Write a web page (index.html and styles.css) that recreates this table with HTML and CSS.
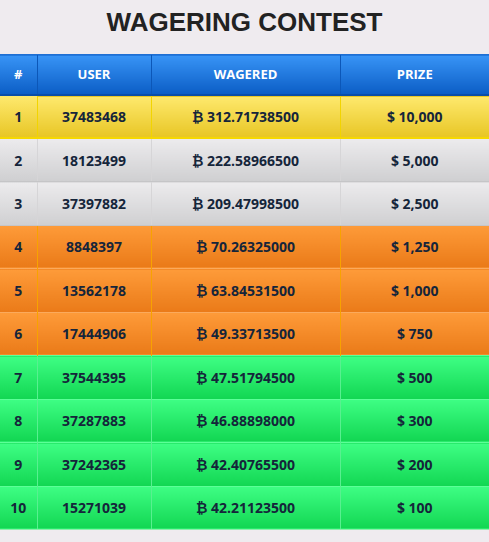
FILE: index.html
```html
<!DOCTYPE html>
<html lang="en">
<head>
  <meta charset="UTF-8" />
  <meta name="viewport" content="width=device-width, initial-scale=1.0"/>
  <title>Wagering Contest</title>
  <link rel="stylesheet" href="styles.css">
</head>
<body>

  <h1 class="title">WAGERING CONTEST</h1>

  <table class="board">
    <colgroup>
      <col class="c-rank">
      <col class="c-user">
      <col class="c-wager">
      <col class="c-prize">
    </colgroup>
    <thead>
      <tr>
        <th>#</th>
        <th>USER</th>
        <th>WAGERED</th>
        <th>PRIZE</th>
      </tr>
    </thead>
    <tbody>
      <tr class="gold">
        <td>1</td><td>37483468</td><td>₿ 312.71738500</td><td>$ 10,000</td>
      </tr>
      <tr class="silver">
        <td>2</td><td>18123499</td><td>₿ 222.58966500</td><td>$ 5,000</td>
      </tr>
      <tr class="silver">
        <td>3</td><td>37397882</td><td>₿ 209.47998500</td><td>$ 2,500</td>
      </tr>
      <tr class="orange">
        <td>4</td><td>8848397</td><td>₿ 70.26325000</td><td>$ 1,250</td>
      </tr>
      <tr class="orange">
        <td>5</td><td>13562178</td><td>₿ 63.84531500</td><td>$ 1,000</td>
      </tr>
      <tr class="orange">
        <td>6</td><td>17444906</td><td>₿ 49.33713500</td><td>$ 750</td>
      </tr>
      <tr class="green">
        <td>7</td><td>37544395</td><td>₿ 47.51794500</td><td>$ 500</td>
      </tr>
      <tr class="green">
        <td>8</td><td>37287883</td><td>₿ 46.88898000</td><td>$ 300</td>
      </tr>
      <tr class="green">
        <td>9</td><td>37242365</td><td>₿ 42.40765500</td><td>$ 200</td>
      </tr>
      <tr class="green">
        <td>10</td><td>15271039</td><td>₿ 42.21123500</td><td>$ 100</td>
      </tr>
    </tbody>
  </table>

</body>
</html>
```

FILE: styles.css
```css
:root {
  --bg: #efebef;
  --text: #15253a;
  --head-top: #3894f6;
  --head-bottom: #0b5dc5;
}
* { box-sizing: border-box; margin:0; padding:0; }
body {
  background: var(--bg);
  font-family: 'Open Sans', 'DejaVu Sans', sans-serif;
}
.title {
  font-family: 'Liberation Sans', Arial, sans-serif;
  font-size: 26px; line-height: 30px; font-weight: bold;
  color: #222;
  text-align: center;
  padding: 7px 0 17px;
}

.board { width:100%; border-collapse: collapse; table-layout: fixed; }
.c-rank  { width:37px; }
.c-user  { width:114px; }
.c-wager { width:189px; }
.c-prize { width:149px; }

.board th {
  height:40px;
  background: linear-gradient(to bottom, var(--head-top), var(--head-bottom));
  color:#fff; font-size:13px; font-weight:700;
  border-left:1px solid #0c57b8;
  border-bottom:2px solid #0a4ea8;
  border-top:1px solid #1f6fd3;
}
.board th:first-child { border-left:none; }

.board td {
  height:43.5px;
  text-align:center;
  font-size:14px; font-weight:700; color: var(--text);
  border-left:1px solid transparent;
}
.board td:first-child { border-left:none; }

.gold td {
  background: linear-gradient(to bottom, #fee96e, #e8c625);
  border-left-color:#f2d400;
  border-bottom:2px solid #f6d800;
}
.silver td {
  background: linear-gradient(to bottom, #ecebed, #cfcfd1);
  border-left-color:#d6d5d7;
  border-top:1px solid #f3f2f4;
  border-bottom:1px solid #c5c5c7;
}
.orange td {
  background: linear-gradient(to bottom, #fe9b39, #ea7a18);
  border-left-color:#f8a200;
  border-top:1px solid #fbaa5c;
}
.green td {
  background: linear-gradient(to bottom, #3efe84, #12d652);
  border-left-color:#58f090;
  border-top:1px solid #5cff98;
}
.green:last-child td { border-bottom:1px solid #8ef0ad; }
```
